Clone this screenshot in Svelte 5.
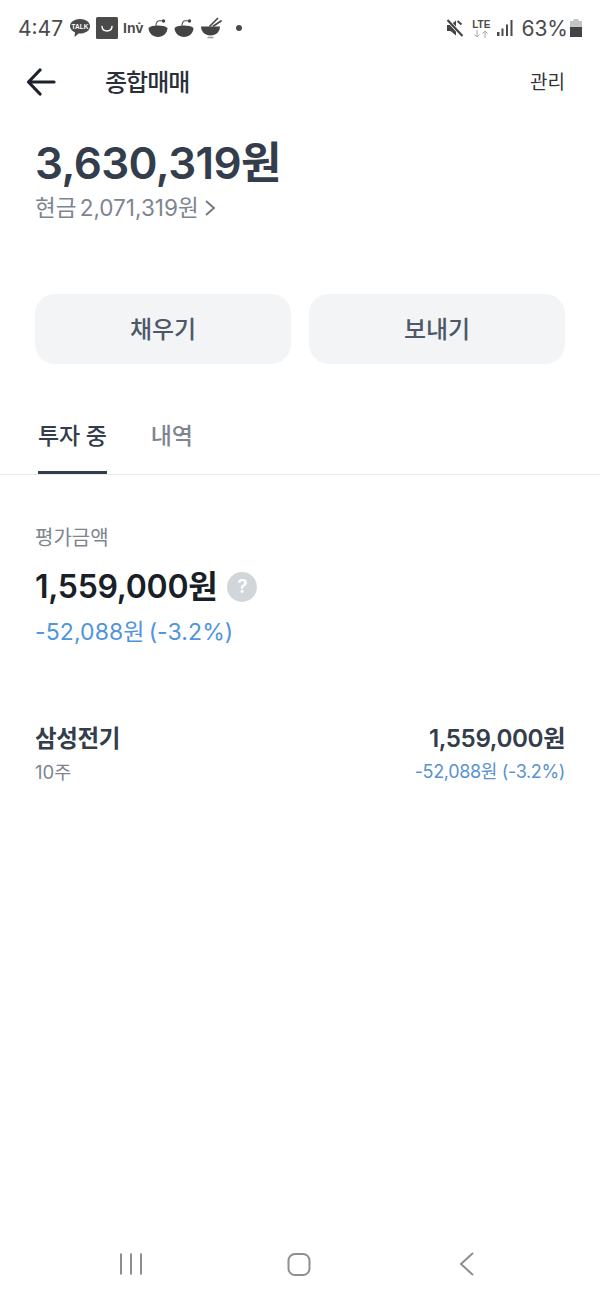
<script>
  const tabs = ["투자 중", "내역"];
</script>

<div class="page">
  <div class="status">
    <span class="time">4:47</span>
    <svg class="ic talkic" width="22" height="20" viewBox="0 0 22 20">
      <path d="M11 1c5.500 0 10 3 10 7.200s-4.500 7.300-10 7.300l-1.300-.1L5.500 19l.5-4.500C3 13 1 10.800 1 8.200 1 4 5.500 1 11 1z" fill="#4a4a4a"/>
      <text x="11" y="10.500" class="talk">TALK</text>
    </svg>
    <svg class="ic" width="22" height="22" viewBox="0 0 22 22">
      <rect width="22" height="22" rx="1.500" fill="#4a4a4a"/>
      <path d="M6 9.500c.6 6 9.400 6 10 0" fill="none" stroke="#fff" stroke-width="1.500" stroke-linecap="round"/>
    </svg>
    <span class="inv">Inv̇</span>
    {#each [0, 1] as n}
      <svg class="ic bowl" width="20" height="20" viewBox="0 0 20 20">
        <path d="M.5 10c2-1.800 5.500-2.500 9.500-2.500s7.500 .7 9.500 2.500c0 5-4.500 9-9.500 9s-9.500-4-9.500-9z" fill="#444"/>
        <path d="M8 8c0-3 1-5 3-5.300h3" fill="none" stroke="#555" stroke-width="1.100"/>
        <circle cx="15.500" cy="3" r="1.700" fill="#444"/>
      </svg>
    {/each}
    <svg class="ic" width="22" height="22" viewBox="0 0 22 22">
      <path d="M1 9.500h19c0 5-3.800 9-9.500 9S1 14.500 1 9.500z" fill="#444"/>
      <path d="M7.500 20.500h6" stroke="#9a9a9a" stroke-width="1.500"/>
      <path d="M10 9 17.500 1.500M13.500 9 21 4" stroke="#4a4a4a" stroke-width="1.700" stroke-linecap="round"/>
    </svg>
    <span class="dot"></span>
    <span class="grow"></span>
    <svg class="mute" width="18" height="20" viewBox="0 0 18 20">
      <path d="M1 7h3.500L10 2.500v15L4.500 13H1z" fill="#444"/>
      <path d="M1.500 2 16.500 18" stroke="#fff" stroke-width="3.500"/>
      <path d="M1.500 2 16.500 18" stroke="#444" stroke-width="2.200"/>
      <path d="M11.500 3 15.500 6.500" stroke="#444" stroke-width="2"/>
    </svg>
    <div class="lte">
      <span>LTE</span>
      <svg width="16" height="8" viewBox="0 0 16 8">
        <path d="M4 0v7M1.500 4.500 4 7l2.500-2.500" fill="none" stroke="#a8a8a8" stroke-width="1"/>
        <path d="M12 8V1M9.500 3.500 12 1l2.500 2.500" fill="none" stroke="#a8a8a8" stroke-width="1"/>
      </svg>
    </div>
    <svg class="signal" width="16" height="18" viewBox="0 0 16 18">
      <rect x="0" y="13" width="2.500" height="4" fill="#4a4a4a"/>
      <rect x="4.500" y="9.500" width="2" height="7.500" fill="#4a4a4a"/>
      <rect x="9" y="5.500" width="2" height="11.500" fill="#4a4a4a"/>
      <rect x="13.500" y="1" width="2" height="16" fill="#4a4a4a"/>
    </svg>
    <span class="pct">63%</span>
    <svg width="12" height="18" viewBox="0 0 12 18">
      <path d="M3.500 0h5v2H12v16H0V2h3.500z" fill="#c4c4c4"/>
      <rect y="8" width="12" height="10" fill="#444"/>
    </svg>
  </div>

  <header class="bar">
    <svg class="back" width="30" height="28" viewBox="0 0 30 28">
      <path d="M28 14H3M14 2 2.500 14 14 26" fill="none" stroke="#1c222b" stroke-width="3.200" stroke-linecap="round" stroke-linejoin="round"/>
    </svg>
    <h1>종합매매</h1>
    <span class="manage">관리</span>
  </header>

  <section class="balance">
    <div class="total">3,630,319원</div>
    <div class="cash">
      <span>현금 2,071,319원</span>
      <svg width="12" height="18" viewBox="0 0 12 18">
        <path d="M2 2l8 7-8 7" fill="none" stroke="#6b7480" stroke-width="1.800"/>
      </svg>
    </div>
  </section>

  <div class="actions">
    <button>채우기</button>
    <button>보내기</button>
  </div>

  <nav class="tabs">
    {#each tabs as tab, i}
      <span class="tab" class:active={i === 0}>{tab}</span>
    {/each}
  </nav>

  <section class="summary">
    <div class="label">평가금액</div>
    <div class="value">
      1,559,000원
      <span class="help">?</span>
    </div>
    <div class="change">-52,088원 (-3.2%)</div>
  </section>

  <section class="holding">
    <div>
      <div class="name">삼성전기</div>
      <div class="qty">10주</div>
    </div>
    <div class="right">
      <div class="amount">1,559,000원</div>
      <div class="diff">-52,088원 (-3.2%)</div>
    </div>
  </section>

  <div class="grow"></div>

  <footer class="softkeys">
    <svg width="24" height="24" viewBox="0 0 24 24">
      <path d="M2 1.500v21M12 1.500v21M22 1.500v21" stroke="#8e8e8e" stroke-width="2"/>
    </svg>
    <svg width="24" height="24" viewBox="0 0 24 24">
      <rect x="1.500" y="2" width="21" height="21" rx="6.500" fill="none" stroke="#8e8e8e" stroke-width="2"/>
    </svg>
    <svg width="24" height="24" viewBox="0 0 24 24">
      <path d="M18 1 6 12l12 11" fill="none" stroke="#8e8e8e" stroke-width="2"/>
    </svg>
  </footer>
</div>

<style>
  :global(body) {
    background: #fff;
  }

  .page {
    width: 600px;
    height: 1300px;
    display: flex;
    flex-direction: column;
    font-family: Inter, "Noto Sans CJK KR", sans-serif;
    color: #1f2630;
    overflow: hidden;
  }

  .grow {
    flex: 1;
  }

  .status {
    height: 56px;
    display: flex;
    align-items: center;
    padding: 0 18px;
    color: #4a4a4a;
    box-sizing: border-box;
  }

  .time {
    font-size: 21px;
    margin-right: 6px;
  }

  .ic {
    margin-right: 4px;
  }

  .talkic {
    margin-right: 5px;
  }

  .talk {
    font: 700 6.500px "Liberation Sans", sans-serif;
    fill: #fff;
    text-anchor: middle;
  }

  .inv {
    font: 700 14px "Liberation Sans", sans-serif;
    margin: 0 5px 0 1px;
  }

  .bowl {
    margin-right: 6px;
  }

  .dot {
    width: 6px;
    height: 6px;
    border-radius: 50%;
    background: #4a4a4a;
    margin-left: 10px;
  }

  .mute {
    margin-right: 8px;
  }

  .lte {
    display: flex;
    flex-direction: column;
    align-items: center;
    font: 700 10px/11px "Liberation Sans", sans-serif;
    margin-right: 7px;
  }

  .lte svg {
    display: block;
  }

  .signal {
    margin-right: 8px;
  }

  .pct {
    font-size: 21px;
    margin-right: 2px;
  }

  .bar {
    height: 52px;
    display: flex;
    align-items: center;
    padding: 0 35px 0 26px;
  }

  .back {
    margin-right: 49px;
  }

  h1 {
    font-size: 24px;
    font-weight: 500;
    margin: 0 0 3px;
    letter-spacing: -1px;
    flex: 1;
    color: #2a303a;
  }

  .manage {
    font-size: 19px;
    color: #2f343b;
    margin-bottom: 3px;
  }

  .balance {
    padding: 0 35px;
    margin-top: 25px;
  }

  .total {
    font-size: 44px;
    font-weight: 600;
    line-height: 60px;
    letter-spacing: -0.6px;
    color: #333d4b;
  }

  .cash {
    display: flex;
    align-items: center;
    gap: 5px;
    font-size: 22.500px;
    line-height: 30px;
    word-spacing: -3px;
    color: #7d8590;
  }

  .actions {
    display: flex;
    gap: 18px;
    padding: 0 35px;
    margin-top: 71px;
  }

  button {
    flex: 1;
    height: 70px;
    border: 0;
    border-radius: 20px;
    background: #f2f4f6;
    color: #4e5968;
    padding: 0 0 4px;
    font: 500 24px Inter, "Noto Sans CJK KR", sans-serif;
  }

  .tabs {
    display: flex;
    gap: 44px;
    padding: 0 38px;
    margin-top: 41px;
    height: 69px;
    border-bottom: 1px solid #e8ebee;
  }

  .tab {
    font-size: 23px;
    font-weight: 500;
    color: #7d8590;
    line-height: 62px;
    height: 69px;
    letter-spacing: -0.2px;
    box-sizing: border-box;
  }

  .tab.active {
    color: #333d4b;
    border-bottom: 3px solid #333d4b;
  }

  .summary {
    padding: 0 35px;
    margin-top: 47px;
  }

  .label {
    font-size: 20px;
    line-height: 32px;
    color: #7d8590;
  }

  .value {
    display: flex;
    align-items: center;
    gap: 10px;
    font-size: 32px;
    font-weight: 600;
    line-height: 44px;
    margin-top: 11px;
    letter-spacing: -0.3px;
    color: #191f28;
  }

  .help {
    width: 30px;
    height: 30px;
    border-radius: 50%;
    background: #d1d6db;
    color: #fff;
    font-size: 19px;
    line-height: 30px;
    text-align: center;
  }

  .change {
    font-size: 23px;
    line-height: 32px;
    margin-top: 7px;
    color: #4f94dc;
    letter-spacing: 0.1px;
    word-spacing: -2.500px;
  }

  .holding {
    display: flex;
    justify-content: space-between;
    padding: 0 35px;
    margin-top: 73px;
  }

  .name {
    font-size: 23.500px;
    font-weight: 600;
    line-height: 36px;
    color: #333d4b;
    letter-spacing: -0.4px;
  }

  .amount {
    font-size: 24.200px;
    font-weight: 600;
    line-height: 36px;
    color: #333d4b;
    letter-spacing: -0.4px;
  }

  .qty {
    font-size: 18.500px;
    line-height: 30px;
    color: #7d8590;
  }

  .right {
    text-align: right;
  }

  .diff {
    font-size: 18px;
    line-height: 30px;
    color: #5a92d0;
    letter-spacing: -0.35px;
  }

  .softkeys {
    height: 48px;
    display: flex;
    justify-content: space-between;
    align-items: flex-start;
    padding: 0 121px 0 119px;
  }
</style>
